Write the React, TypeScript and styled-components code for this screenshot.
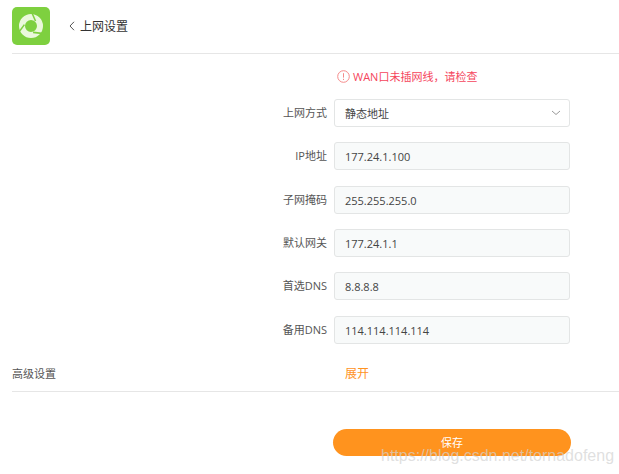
import React from "react";
import styled, { createGlobalStyle } from "styled-components";

const GlobalStyle = createGlobalStyle`
	html, body {
		margin: 0;
		background: #fff;
		font-family: "Open Sans", "Noto Sans CJK SC", sans-serif;
	}
`;

const Page = styled.div`
	position: relative;
	width: 619px;
	height: 474px;
	overflow: hidden;
	box-sizing: border-box;
	padding-left: 12px;
`;

const Header = styled.header`
	display: flex;
	align-items: center;
	height: 54px;
	padding-bottom: 8px;
	padding-top: 7px;
	box-sizing: border-box;
	border-bottom: 1px solid #e6e6e6;
`;

const Logo = styled.div`
	width: 38px;
	height: 38px;
	border-radius: 5px;
	background: #7ed03f;
	display: flex;
	align-items: center;
	justify-content: center;
`;

const BackLink = styled.div`
	display: flex;
	align-items: center;
	margin-left: 18px;
	font-size: 12px;
	color: #333;
`;

const BackIcon = styled.svg`
	width: 8px;
	height: 10px;
	margin-right: 4px;
`;

const Form = styled.div`
	display: flex;
	flex-direction: column;
	width: 558px;
`;

const Warning = styled.div`
	display: flex;
	align-items: center;
	height: 16px;
	margin: 14px 0 15px 325px;
	font-size: 11px;
	color: #f5455c;
`;

const WarningIcon = styled.svg`
	width: 13px;
	height: 13px;
	margin-right: 3px;
`;

const Row = styled.div<{ $gap: number }>`
	display: flex;
	align-items: center;
	height: 28px;
	margin-bottom: ${(p) => p.$gap}px;
`;

const Label = styled.div`
	width: 315px;
	padding-bottom: 3px;
	text-align: right;
	font-size: 11px;
	color: #555;
`;

const Field = styled.div<{ $select?: boolean }>`
	display: flex;
	align-items: center;
	justify-content: space-between;
	width: 236px;
	height: 28px;
	margin-left: 7px;
	padding: 0 8px 0 10px;
	box-sizing: border-box;
	border: 1px solid #e3e5e5;
	border-radius: 3px;
	background: ${(p) => (p.$select ? "#fff" : "#f8fafa")};
	font-size: 11px;
	color: #444;
`;

const Advanced = styled.div`
	display: flex;
	align-items: center;
	height: 36px;
	padding-bottom: 1px;
	box-sizing: border-box;
	margin-top: 12px;
	border-bottom: 1px solid #e6e6e6;
	width: 607px;
	font-size: 11px;
	color: #555;
`;

const AdvancedLabel = styled.div`
	width: 333px;
`;

const Expand = styled.div`
	font-size: 12px;
	color: #ff931e;
`;

const SaveButton = styled.div`
	display: flex;
	align-items: center;
	justify-content: center;
	width: 238px;
	height: 27px;
	margin: 37px 0 0 321px;
	padding-bottom: 2px;
	box-sizing: border-box;
	border-radius: 14px;
	background: #ff931e;
	font-size: 11px;
	color: #fff;
`;

const Watermark = styled.div`
	position: absolute;
	left: 381px;
	top: 447px;
	font-family: "Liberation Sans", sans-serif;
	font-size: 16px;
	color: rgba(210, 210, 210, 0.7);
`;

const rows = [
	{ label: "IP地址", value: "177.24.1.100", gap: 16 },
	{ label: "子网掩码", value: "255.255.255.0", gap: 15 },
	{ label: "默认网关", value: "177.24.1.1", gap: 15 },
	{ label: "首选DNS", value: "8.8.8.8", gap: 16 },
	{ label: "备用DNS", value: "114.114.114.114", gap: 0 },
];

export default function App() {
	return (
		<Page>
			<GlobalStyle />
			<Header>
				<Logo>
					<svg width="28" height="28" viewBox="-14 -14 28 28">
						<circle r="9" fill="none" stroke="#eaf8dc" strokeWidth="6" />
						{[0, 120, 240].map((angle) => (
							<path
								key={angle}
								d="M1-13 4.5-5"
								stroke="#7ed03f"
								strokeWidth="1.6"
								transform={`rotate(${angle})`}
							/>
						))}
					</svg>
				</Logo>
				<BackLink>
					<BackIcon viewBox="0 0 8 10">
						<path d="M6 .8 2 5l4 4.2" fill="none" stroke="#555" strokeWidth="1" />
					</BackIcon>
					上网设置
				</BackLink>
			</Header>
			<Form>
				<Warning>
					<WarningIcon viewBox="0 0 13 13">
						<circle cx="6.5" cy="6.5" r="5.8" fill="none" stroke="#f58a8a" />
						<path d="M6.5 3.2v4.4M6.5 8.8v1.2" stroke="#f58a8a" strokeWidth="1" />
					</WarningIcon>
					WAN口未插网线，请检查
				</Warning>
				<Row $gap={15}>
					<Label>上网方式</Label>
					<Field $select>
						静态地址
						<svg width="10" height="6" viewBox="0 0 10 6">
							<path d="M1 1l4 3.5L9 1" fill="none" stroke="#999" />
						</svg>
					</Field>
				</Row>
				{rows.map((row) => (
					<Row key={row.label} $gap={row.gap}>
						<Label>{row.label}</Label>
						<Field>{row.value}</Field>
					</Row>
				))}
			</Form>
			<Advanced>
				<AdvancedLabel>高级设置</AdvancedLabel>
				<Expand>展开</Expand>
			</Advanced>
			<SaveButton>保存</SaveButton>
			<Watermark>https://blog.csdn.net/tornadofeng</Watermark>
		</Page>
	);
}
